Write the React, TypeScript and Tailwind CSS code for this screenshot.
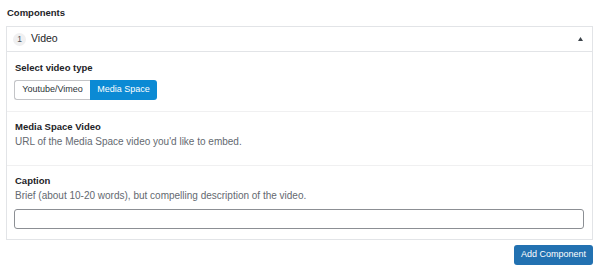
export default function App() {
  return (
    <div className="w-[600px] h-[274px] bg-white text-[#1d2327] font-['Liberation_Sans',Arial,sans-serif]">
      <div className="pl-[7px] pt-[7px] text-[9.5px] leading-[12px] font-bold">Components</div>
      <div className="ml-[6px] w-[587px] mt-[7px] border border-[#e2e4e7]">
        <div className="flex items-center h-[25px] border-b border-[#e2e4e7] pl-[6px] pr-[9px]">
          <span className="w-[13px] h-[13px] rounded-full bg-[#f0f0f1] text-[8.5px] flex items-center justify-center text-[#50575e]">1</span>
          <span className="ml-[5px] text-[10.5px]">Video</span>
          <svg className="ml-auto" width="5" height="4" viewBox="0 0 5 4">
            <path d="M2.5 0 L5 4 L0 4 Z" fill="#3c434a" />
          </svg>
        </div>
        <div className="pl-[7px] pr-[8px] pt-[10px] pb-[11px] border-b border-[#f0f0f1]">
          <div className="pl-px text-[9.5px] leading-[12px] font-bold">Select video type</div>
          <div className="mt-[6px] flex">
            <button className="h-[20px] w-[76px] text-[9px] border border-[#c3c4c7] border-r-0 rounded-l-[3px] bg-white text-[#2c3338]">Youtube/Vimeo</button>
            <button className="h-[20px] w-[67px] text-[9px] bg-[#0b8ad4] text-white rounded-r-[3px]">Media Space</button>
          </div>
        </div>
        <div className="pl-[7px] pr-[8px] pt-[9px] pb-[17px] border-b border-[#f0f0f1]">
          <div className="pl-px text-[9.5px] leading-[12px] font-bold">Media Space Video</div>
          <div className="pl-px mt-[2px] text-[10px] leading-[13px] text-[#646970]">URL of the Media Space video you'd like to embed.</div>
        </div>
        <div className="pl-[7px] pr-[8px] pt-[9px] pb-[10px]">
          <div className="pl-px text-[9.5px] leading-[12px] font-bold">Caption</div>
          <div className="pl-px mt-[2px] text-[10px] leading-[13px] text-[#646970]">Brief (about 10-20 words), but compelling description of the video.</div>
          <input className="mt-[7px] block w-full h-[20px] border border-[#8c8f94] rounded-[3px] outline-none" />
        </div>
      </div>
      <div className="flex justify-end pr-[7px] pt-[5px]">
        <button className="h-[20px] w-[79px] rounded-[3px] bg-[#2271b1] text-white text-[9px]">Add Component</button>
      </div>
    </div>
  );
}
